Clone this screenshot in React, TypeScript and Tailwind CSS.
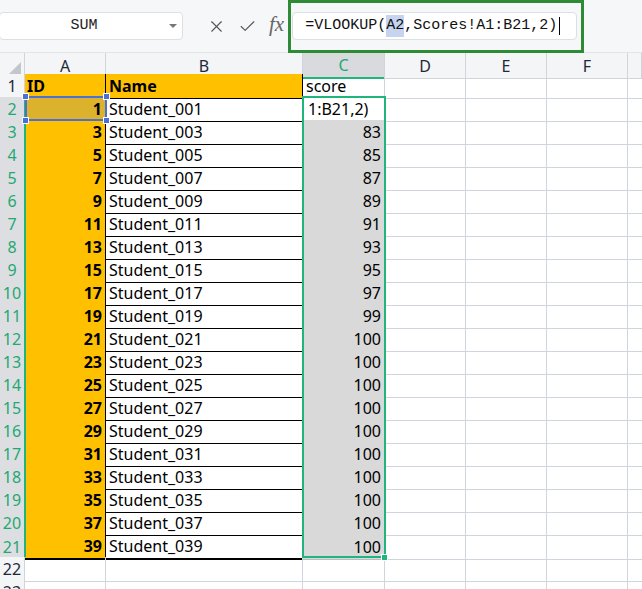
import { X, Check } from 'lucide-react';

const COLS = ['A', 'B', 'C', 'D', 'E', 'F', ''];
const scores = [null, 83, 85, 87, 89, 91, 93, 95, 97, 99, 100, 100, 100, 100, 100, 100, 100, 100, 100, 100];

const gridCols = 'grid grid-cols-[25px_81px_197px_82px_81px_81px_81px_1fr]';
const cellFont = { fontFamily: '"Noto Sans", "Liberation Sans", sans-serif' };

function RowHeader({ n, selected }: { n: number; selected: boolean }) {
  return (
    <div
      className={`flex items-center justify-center border-r border-b border-[#d0d4dc] text-[16px] ${
        selected ? 'bg-[#dcdee2] text-[#1fa971]' : 'bg-[#f4f5f7] text-[#1e2a3a]'
      }`}
    >
      {n}
    </div>
  );
}

export default function App() {
  const rows = Array.from({ length: 20 }, (_, i) => {
    const id = i * 2 + 1;
    return { id, name: `Student_${String(id).padStart(3, '0')}`, score: scores[i] };
  });

  return (
    <div className="w-[642px] h-[589px] overflow-hidden bg-white relative" style={cellFont}>
      {/* Toolbar */}
      <div className="h-[53px] bg-[#f6f7f9] flex items-center border-b border-[#e2e4e8]">
        <div className="w-[184px] h-[28px] -ml-[1px] bg-white border border-[#dcdfe4] rounded flex items-center relative">
          <span className="flex-1 text-center text-[15px] text-[#222] pr-[14px]" style={{ fontFamily: '"Liberation Mono", monospace' }}>
            SUM
          </span>
          <span className="absolute right-[5px] top-[11px] w-0 h-0 border-l-[4px] border-r-[4px] border-t-[4px] border-l-transparent border-r-transparent border-t-[#777]" />
        </div>
        <div className="flex items-center ml-[24px] gap-[12px] text-[#555]">
          <X size={19} strokeWidth={1.4} />
          <Check size={19} strokeWidth={1.4} />
          <span className="italic text-[21px] text-[#666] -mt-[2px]" style={{ fontFamily: '"Liberation Serif", serif' }}>
            fx
          </span>
        </div>
        <div className="ml-[8px] w-[285px] h-[28px] bg-white border border-[#dcdfe4] rounded flex items-center pl-[12px]">
          <span className="text-[15px] text-[#111] flex items-center" style={{ fontFamily: '"Liberation Mono", monospace' }}>
            =VLOOKUP(<span className="bg-[#c6d4ef]">A2</span>,Scores!A1:B21,2)
            <span className="inline-block w-[1px] h-[18px] bg-black ml-[2px]" />
          </span>
        </div>
      </div>

      {/* Annotation box round the formula bar */}
      <div className="absolute left-[288px] top-0 w-[296px] h-[53px] border-[3px] border-[#2f8a36]" />

      {/* Sheet */}
      <div className="relative">
        {/* Column headers */}
        <div className={`${gridCols} h-[21px]`}>
          <div className="bg-[#f4f5f7] border-r border-b border-[#d0d4dc] flex items-end justify-end pr-[3px] pb-[3px]">
            <svg width="13" height="13" viewBox="0 0 13 13">
              <polygon points="13,0 13,13 0,13" fill="#c3c6cc" />
            </svg>
          </div>
          {COLS.map((c, i) => (
            <div
              key={i}
              className={`flex items-center justify-center text-[16px] border-r ${
                c === 'C'
                  ? 'bg-[#d8dade] text-[#1fa971] border-b-2 border-b-[#1fb57d] border-r-[#d0d4dc]'
                  : 'bg-[#f4f5f7] text-[#1e2a3a] border-b border-[#d0d4dc]'
              }`}
            >
              {c}
            </div>
          ))}
        </div>

        {/* Row 1 */}
        <div className={`${gridCols} h-[23px] text-[16px] text-black`}>
          <RowHeader n={1} selected={false} />
          <div className="bg-[#ffc000] border-r border-b border-black font-bold flex items-center px-[2px]">ID</div>
          <div className="bg-[#ffc000] border-r border-b border-black font-bold flex items-center px-[3px]">Name</div>
          <div className="border-r border-b border-[#d0d4dc] flex items-center px-[3px]">score</div>
          <div className="border-r border-b border-[#d0d4dc]" />
          <div className="border-r border-b border-[#d0d4dc]" />
          <div className="border-r border-b border-[#d0d4dc]" />
          <div className="border-b border-[#d0d4dc]" />
        </div>

        {/* Rows 2-21 */}
        {rows.map((r, i) => {
          const last = i === rows.length - 1;
          const first = i === 0;
          return (
            <div key={r.id} className={`${gridCols} h-[23px] text-[16px] text-black`}>
              <RowHeader n={i + 2} selected />
              <div
                className={`${first ? 'bg-[#dcb22c]' : 'bg-[#ffc000]'} border-r border-black ${
                  last ? 'border-b-2' : 'border-b'
                } font-bold flex items-center justify-end px-[3px]`}
              >
                {r.id}
              </div>
              <div className={`border-r border-black ${last ? 'border-b-2' : 'border-b'} flex items-center px-[3px]`}>
                {r.name}
              </div>
              {first ? (
                <div className="bg-white border-r border-b border-[#d0d4dc] flex items-center px-[5px]">1:B21,2)</div>
              ) : (
                <div className="bg-[#d9d9d9] border-r border-b border-[#b8bcc6] flex items-center justify-end px-[3px]">
                  {r.score}
                </div>
              )}
              <div className="border-r border-b border-[#d0d4dc]" />
              <div className="border-r border-b border-[#d0d4dc]" />
              <div className="border-r border-b border-[#d0d4dc]" />
              <div className="border-b border-[#d0d4dc]" />
            </div>
          );
        })}

        {/* Rows 22-23 */}
        {[22, 23].map((n) => (
          <div key={n} className={`${gridCols} h-[23px]`}>
            <RowHeader n={n} selected={false} />
            {COLS.map((_, i) => (
              <div key={i} className={`border-b border-[#d0d4dc] ${i < 6 ? 'border-r' : ''}`} />
            ))}
          </div>
        ))}

        {/* Selected rows marker on row header */}
        <div className="absolute left-[24px] top-[44px] w-[2px] h-[460px] bg-[#1fb57d]" />

        {/* Selection C2:C21 */}
        <div className="absolute left-[302px] top-[43px] w-[84px] h-[462px] border-2 border-[#1fb57d] pointer-events-none" />
        <div className="absolute left-[381px] top-[501px] w-[7px] h-[7px] bg-[#1fb57d] border border-white" />

        {/* Reference highlight A2 */}
        <div className="absolute left-[25px] top-[43px] w-[82px] h-[25px] border-2 border-[#4a70d6] pointer-events-none" />
        {[
          'left-[22px] top-[40px]',
          'left-[103px] top-[40px]',
          'left-[22px] top-[64px]',
          'left-[103px] top-[64px]',
        ].map((pos) => (
          <div key={pos} className={`absolute ${pos} w-[7px] h-[7px] bg-[#4a70d6] border border-white`} />
        ))}
      </div>
    </div>
  );
}
